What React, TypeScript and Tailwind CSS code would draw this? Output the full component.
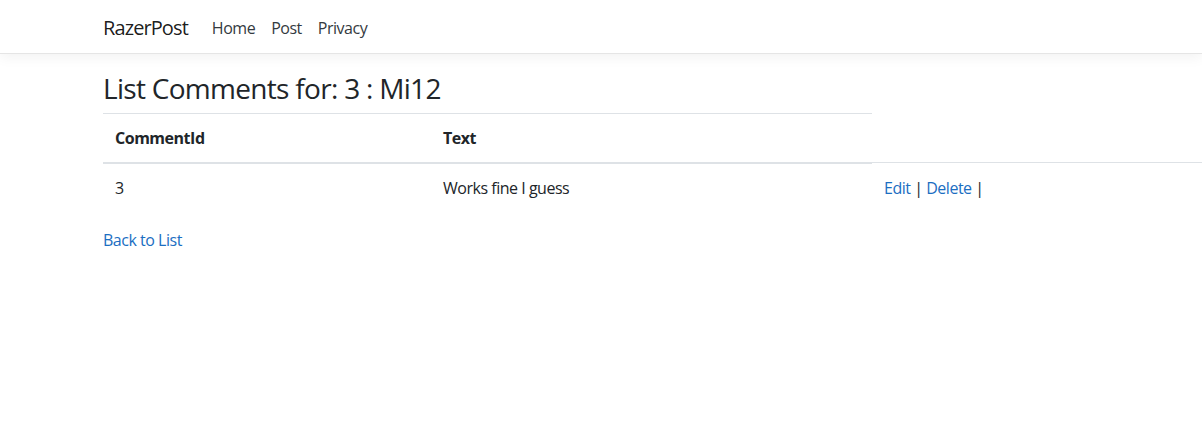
export default function App() {
  const font = { fontFamily: '"Open Sans", "Noto Sans", sans-serif' };

  return (
    <div className="min-h-screen bg-white text-[#212529] text-[16px] tracking-[-0.03em]" style={font}>
      {/* Navbar */}
      <nav className="h-[54px] border-b border-[#e5e5e5] bg-white shadow-[0_4px_12px_rgba(0,0,0,0.05)]">
        <div className="flex h-[53px] items-center pl-[103px] pt-[2px]">
          <a href="#" className="mr-4 text-[20px] leading-[30px] tracking-[-0.045em] text-[rgba(0,0,0,0.9)]">
            RazerPost
          </a>
          <ul className="flex items-center">
            <li>
              <a href="#" className="block px-2 leading-6 text-[#343a40]">Home</a>
            </li>
            <li>
              <a href="#" className="block px-2 leading-6 text-[#343a40]">Post</a>
            </li>
            <li>
              <a href="#" className="block px-2 leading-6 text-[#343a40]">Privacy</a>
            </li>
          </ul>
        </div>
      </nav>

      <main className="mt-4 pl-[103px]">
        <h3 className="mb-[8px] pt-[1px] text-[28px] leading-[34px] font-normal tracking-[-0.025em]">
          List Comments for: 3 : Mi12
        </h3>

        {/* Table */}
        <div className="mb-4 leading-6">
          <div className="flex w-[769px] border-t border-[#dee2e6] font-bold">
            <div className="w-[328px] p-3">CommentId</div>
            <div className="w-[441px] p-3">Text</div>
          </div>
          <div className="flex">
            <div className="w-[328px] border-t-2 border-[#dee2e6] p-3">3</div>
            <div className="w-[441px] border-t-2 border-[#dee2e6] p-3">Works fine I guess</div>
            <div className="flex-1 border-t border-[#dee2e6] px-3 pt-[13px] pb-3">
              <a href="#" className="text-[#1b6ec2]">Edit</a> |{" "}
              <a href="#" className="text-[#1b6ec2]">Delete</a> |
            </div>
          </div>
        </div>

        <div className="leading-6">
          <a href="#" className="text-[#1b6ec2]">Back to List</a>
        </div>
      </main>
    </div>
  );
}
